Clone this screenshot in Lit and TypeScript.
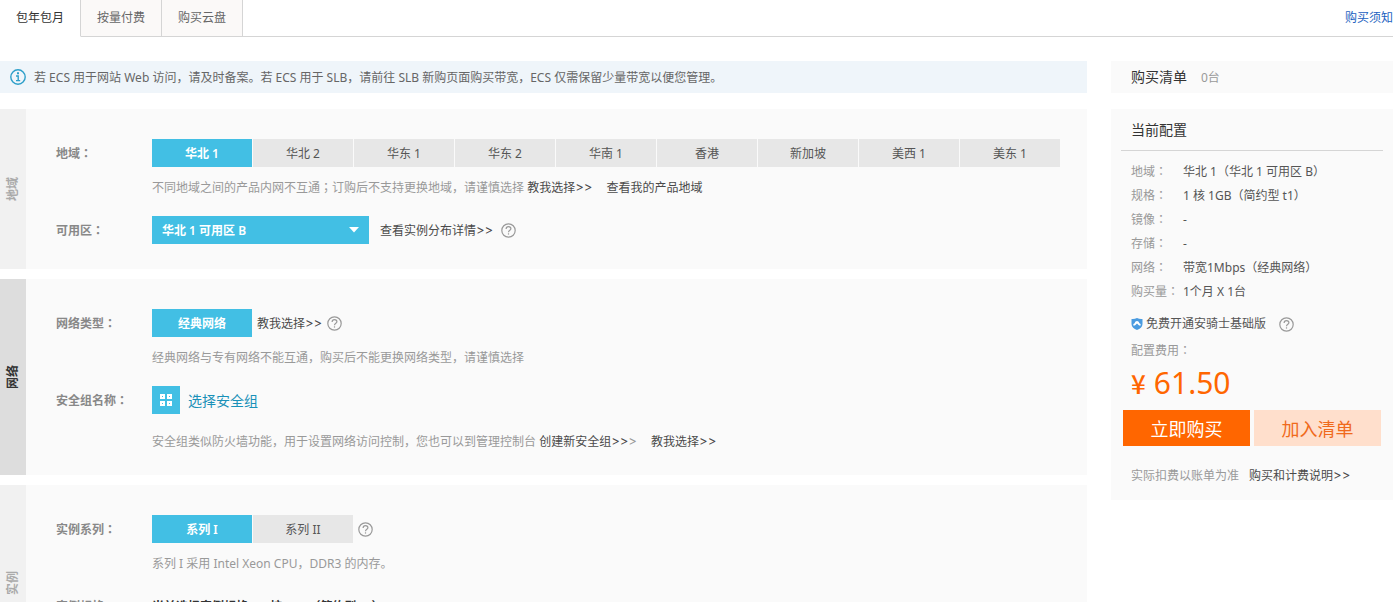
import { LitElement, html, css } from "lit";
import { customElement, property, state } from "lit/decorators.js";
import { classMap } from "lit/directives/class-map.js";

const controls = css`
  :host {
    box-sizing: border-box;
    font-family: "Noto Sans", "Noto Sans CJK SC", sans-serif;
    font-size: 12px;
    line-height: 18px;
    color: #555;
  }
  *, *::before, *::after { box-sizing: border-box; }
  button, select { font: inherit; border: 0; border-radius: 0; margin: 0; padding: 0; cursor: pointer; }
  a { color: #4a4a4a; text-decoration: none; }
  svg { display: block; }
  .mark { font-family: "Noto Sans CJK TC", sans-serif; line-height: 0; }
  .more { font-family: Inter, sans-serif; font-size: 13px; line-height: 0; }
`;

/* Sets colons and semicolons in the middle of their square. */
const cn = (text: string) =>
  text.split(/([：；])/).map((part) => (/^[：；]$/.test(part) ? html`<span class="mark">${part}</span>` : part));

const more = (text: string) => html`${text}<span class="more">&gt;&gt;</span>`;

@customElement("help-tip")
class HelpTip extends LitElement {
  static styles = [controls, css`
    :host { display: inline-flex; }
    .tip { background: none; width: 15px; height: 15px; }
  `];
  render() {
    return html`<button class="tip" type="button" aria-label="帮助">
      <svg width="15" height="15" viewBox="0 0 15 15" fill="none" stroke="#999" stroke-width="1.2">
        <circle cx="7.5" cy="7.5" r="6.7"></circle>
        <path d="M5.1 6.1C5.1 4.5 6.1 3.7 7.5 3.7S9.9 4.6 9.9 5.8C9.9 7.3 7.5 7.4 7.5 9.3"></path>
        <path d="M7.5 10.3V11.6"></path>
      </svg>
    </button>`;
  }
}

@customElement("option-group")
class OptionGroup extends LitElement {
  @property({ type: Array }) options: string[] = [];
  @property() label = "";
  @state() selected = 0;
  static styles = [controls, css`
    :host { display: block; }
    .group { display: flex; gap: 1px; }
    .option { flex: 0 1 100px; width: 100px; height: 28px; padding-top: 2px; background: #e7e7e7; color: #555; white-space: nowrap; }
    .on { background: #42bfe4; color: #fff; font-weight: 600; }
  `];
  render() {
    return html`<div class="group" role="group" aria-label=${this.label}>
      ${this.options.map((o, i) => html`<button type="button"
        class=${classMap({ option: true, on: i === this.selected })}
        aria-pressed=${i === this.selected ? "true" : "false"}
        @click=${() => (this.selected = i)}>${o}</button>`)}
    </div>`;
  }
}

@customElement("config-section")
class ConfigSection extends LitElement {
  @property() name = "";
  @property({ type: Boolean }) active = false;
  static styles = [controls, css`
    :host { display: flex; background: #fafafa; }
    .side {
      flex: none; width: 26px; background: #f1f1f1; color: #aaa; font-weight: 700;
      display: flex; align-items: center; justify-content: center;
    }
    .side span { writing-mode: vertical-rl; text-orientation: sideways; transform: rotate(180deg); line-height: 24px; }
    .active { background: #ddd; color: #333; }
    .body { flex: 1; min-width: 0; padding: 30px 26px 25px 30px; }
  `];
  render() {
    return html`<div class=${classMap({ side: true, active: this.active })}><span>${this.name}</span></div>
      <div class="body"><slot></slot></div>`;
  }
}

@customElement("buy-summary")
class BuySummary extends LitElement {
  rows = [
    ["地域：", "华北 1（华北 1 可用区 B）"],
    ["规格：", "1 核 1GB（简约型 t1）"],
    ["镜像：", "-"],
    ["存储：", "-"],
    ["网络：", "带宽1Mbps（经典网络）"],
    ["购买量：", "1个月 X 1台"],
  ];
  static styles = [controls, css`
    :host { display: flex; flex-direction: column; gap: 16px; }
    .card { background: #fafafa; }
    .list { height: 32px; padding: 0 20px; display: flex; align-items: center; gap: 14px; }
    h2 { margin: 0; font-size: 14px; line-height: 20px; font-weight: 400; color: #333; }
    .muted { color: #999; padding-top: 1px; }
    .config { padding: 0 10px 15px; }
    .title { padding: 11px 10px 10px; border-bottom: 1px solid #d5d5d5; }
    dl { margin: 9px 10px 10px; display: grid; grid-template-columns: 52px 1fr; line-height: 24px; }
    dt { color: #999; white-space: nowrap; }
    dd { margin: 0; }
    .guard { display: flex; align-items: center; margin: 0 10px; height: 20px; }
    .guard span { margin: 0 13px 0 3px; }
    .fee { margin: 8px 10px 0; color: #999; }
    .price { margin: 4px 10px 8px; font-size: 30px; line-height: 38px; color: #f60; display: flex; gap: 8px; }
    .yen { font-family: "Noto Sans CJK SC", sans-serif; font-size: 26px; font-weight: 500; }
    .actions { display: flex; gap: 4px; margin: 0 2px 21px; }
    .actions button { flex: 1; height: 36px; padding-top: 2px; font-size: 18px; background: #ffdfcc; color: #f06a1c; }
    .actions .buy { background: #f60; color: #fff; }
    .note { margin: 0 10px; display: flex; gap: 10px; color: #999; white-space: nowrap; }
  `];
  render() {
    return html`
      <section class="card list"><h2>购买清单</h2><span class="muted">0台</span></section>
      <section class="card config">
        <div class="title"><h2>当前配置</h2></div>
        <dl>${this.rows.map(([k, v]) => html`<dt>${cn(k)}</dt><dd>${v}</dd>`)}</dl>
        <div class="guard">
          <svg width="12" height="12" viewBox="0 0 12 12">
            <path fill="#4a9be0" d="M6 0C7.8 1 9.5 1.2 11.5 1V6C11.5 9 9 11 6 12 3 11 .5 9 .5 6V1C2.5 1.2 4.2 1 6 0Z"></path>
            <path fill="#fff" d="M2.3 7.6C2 6.2 2.8 5.4 3.7 5.2 4 3.9 5 3.1 6 3.1S8 3.9 8.3 5.2C9.2 5.4 10 6.2 9.7 7.6H8.1L6 5.6 3.9 7.6Z"></path>
          </svg>
          <span>免费开通安骑士基础版</span><help-tip></help-tip>
        </div>
        <div class="fee">${cn("配置费用：")}</div>
        <div class="price"><span class="yen">¥</span><span>61.50</span></div>
        <div class="actions">
          <button class="buy" type="button">立即购买</button>
          <button type="button">加入清单</button>
        </div>
        <div class="note"><span>实际扣费以账单为准</span><a href="#">${more("购买和计费说明")}</a></div>
      </section>`;
  }
}

@customElement("app-root")
class AppRoot extends LitElement {
  @state() tab = 0;
  tabs = ["包年包月", "按量付费", "购买云盘"];
  regions = ["华北 1", "华北 2", "华东 1", "华东 2", "华南 1", "香港", "新加坡", "美西 1", "美东 1"];
  static styles = [controls, css`
    :host { display: block; height: 100vh; overflow: hidden; background: #fff; padding-right: 7px; }
    .tabs { display: flex; height: 37px; }
    .tab { width: 81px; background: #fbf9f8; color: #666; border-right: 1px solid #d5d5d5; border-bottom: 1px solid #d5d5d5; }
    .current { background: #fff; color: #333; border-bottom-color: #fff; }
    .rest { flex: 1; display: flex; justify-content: flex-end; align-items: center; border-bottom: 1px solid #d5d5d5; }
    .rest a { color: #1b5fc0; }
    .page { display: grid; grid-template-columns: minmax(0, 1fr) 282px; column-gap: 24px; align-items: start; padding-top: 24px; }
    .notice { height: 32px; background: #eff5fa; display: flex; align-items: center; gap: 8px; padding-left: 10px; color: #666; margin-bottom: 16px; }
    .notice span { padding-top: 1px; }
    .sections { display: flex; flex-direction: column; gap: 10px; }
    .row { display: grid; grid-template-columns: 96px minmax(0, 1fr); align-items: center; min-height: 28px; }
    .name { color: #888; font-weight: 600; padding-top: 2px; }
    .field { display: flex; align-items: center; gap: 5px; white-space: nowrap; }
    .field a { padding-top: 2px; }
    .hint { margin: 13px 0 20px 96px; line-height: 16px; color: #999; white-space: nowrap; }
    .gap { margin-left: 11px; }
    .last { margin: 20px 0 0 96px; }
    .zone { position: relative; width: 217px; height: 28px; margin-right: 6px; }
    .zone + a { margin-right: 3px; }
    .zone select { appearance: none; width: 100%; height: 100%; padding: 2px 10px 0; background: #42bfe4; color: #fff; font-weight: 600; }
    .zone svg { position: absolute; right: 10px; top: 11px; pointer-events: none; }
    .pick { display: flex; align-items: center; gap: 8px; background: none; color: #1a91b8; font-size: 14px; }
    .pick .label { padding-top: 2px; }
    .tile { width: 28px; height: 28px; background: #42bfe4; display: grid; place-items: center; }
    .strong { color: #333; font-weight: 600; padding-top: 2px; }
  `];
  render() {
    return html`
      <nav class="tabs">
        ${this.tabs.map((t, i) => html`<button type="button" class=${classMap({ tab: true, current: i === this.tab })}
          @click=${() => (this.tab = i)}>${t}</button>`)}
        <div class="rest"><a href="#">购买须知</a></div>
      </nav>
      <div class="page">
        <main>
          <div class="notice">
            <svg width="16" height="16" viewBox="0 0 16 16" fill="none" stroke="#2d9fc9">
              <circle cx="8" cy="8" r="7.2" stroke-width="1.4"></circle>
              <path d="M7 4.2H9" stroke-width="2"></path>
              <path d="M6 7H8.2V11.4M6 11.6H10.2" stroke-width="1.4"></path>
            </svg>
            <span>若 ECS 用于网站 Web 访问，请及时备案。若 ECS 用于 SLB，请前往 SLB 新购页面购买带宽，ECS 仅需保留少量带宽以便您管理。</span>
          </div>
          <div class="sections">
            <config-section name="地域">
              <div class="row"><span class="name">${cn("地域：")}</span><option-group label="地域" .options=${this.regions}></option-group></div>
              <div class="hint">${cn("不同地域之间的产品内网不互通；订购后不支持更换地域，请谨慎选择")} <a href="#">${more("教我选择")}</a> <a class="gap" href="#">查看我的产品地域</a></div>
              <div class="row"><label class="name" for="zone">${cn("可用区：")}</label>
                <div class="field">
                  <div class="zone"><select id="zone"><option>华北 1 可用区 B</option></select>
                    <svg width="10" height="6" viewBox="0 0 10 6"><path fill="#fff" d="M0 0H10L5 5.5Z"></path></svg></div>
                  <a href="#">${more("查看实例分布详情")}</a><help-tip></help-tip>
                </div>
              </div>
            </config-section>
            <config-section name="网络" active>
              <div class="row"><span class="name">${cn("网络类型：")}</span>
                <div class="field"><option-group label="网络类型" .options=${["经典网络"]}></option-group><a href="#">${more("教我选择")}</a><help-tip></help-tip></div>
              </div>
              <div class="hint">经典网络与专有网络不能互通，购买后不能更换网络类型，请谨慎选择</div>
              <div class="row"><span class="name">${cn("安全组名称：")}</span>
                <div class="field"><button class="pick" type="button"><span class="tile">
                  <svg width="12" height="12" viewBox="0 0 12 12" fill="none" stroke="#fff" stroke-width="2">
                    <path d="M1 1H4V4H1ZM8 1H11V4H8ZM1 8H4V11H1ZM8 8H11V11H8Z"></path>
                  </svg></span><span class="label">选择安全组</span></button></div>
              </div>
              <div class="hint last">安全组类似防火墙功能，用于设置网络访问控制，您也可以到管理控制台 <a href="#">${more("创建新安全组")}</a><span class="more">&gt;</span> <a class="gap" href="#">${more("教我选择")}</a></div>
            </config-section>
            <config-section name="实例">
              <div class="row"><span class="name">${cn("实例系列：")}</span>
                <div class="field"><option-group label="实例系列" .options=${["系列 I", "系列 II"]}></option-group><help-tip></help-tip></div>
              </div>
              <div class="hint">系列 I 采用 Intel Xeon CPU，DDR3 的内存。</div>
              <div class="row"><span class="name">${cn("实例规格：")}</span><span class="strong">${cn("当前选择实例规格：1 核 1GB（简约型 t1）")}</span></div>
              <div class="hint last">请根据业务需要选择实例规格</div>
            </config-section>
          </div>
        </main>
        <aside><buy-summary></buy-summary></aside>
      </div>`;
  }
}
